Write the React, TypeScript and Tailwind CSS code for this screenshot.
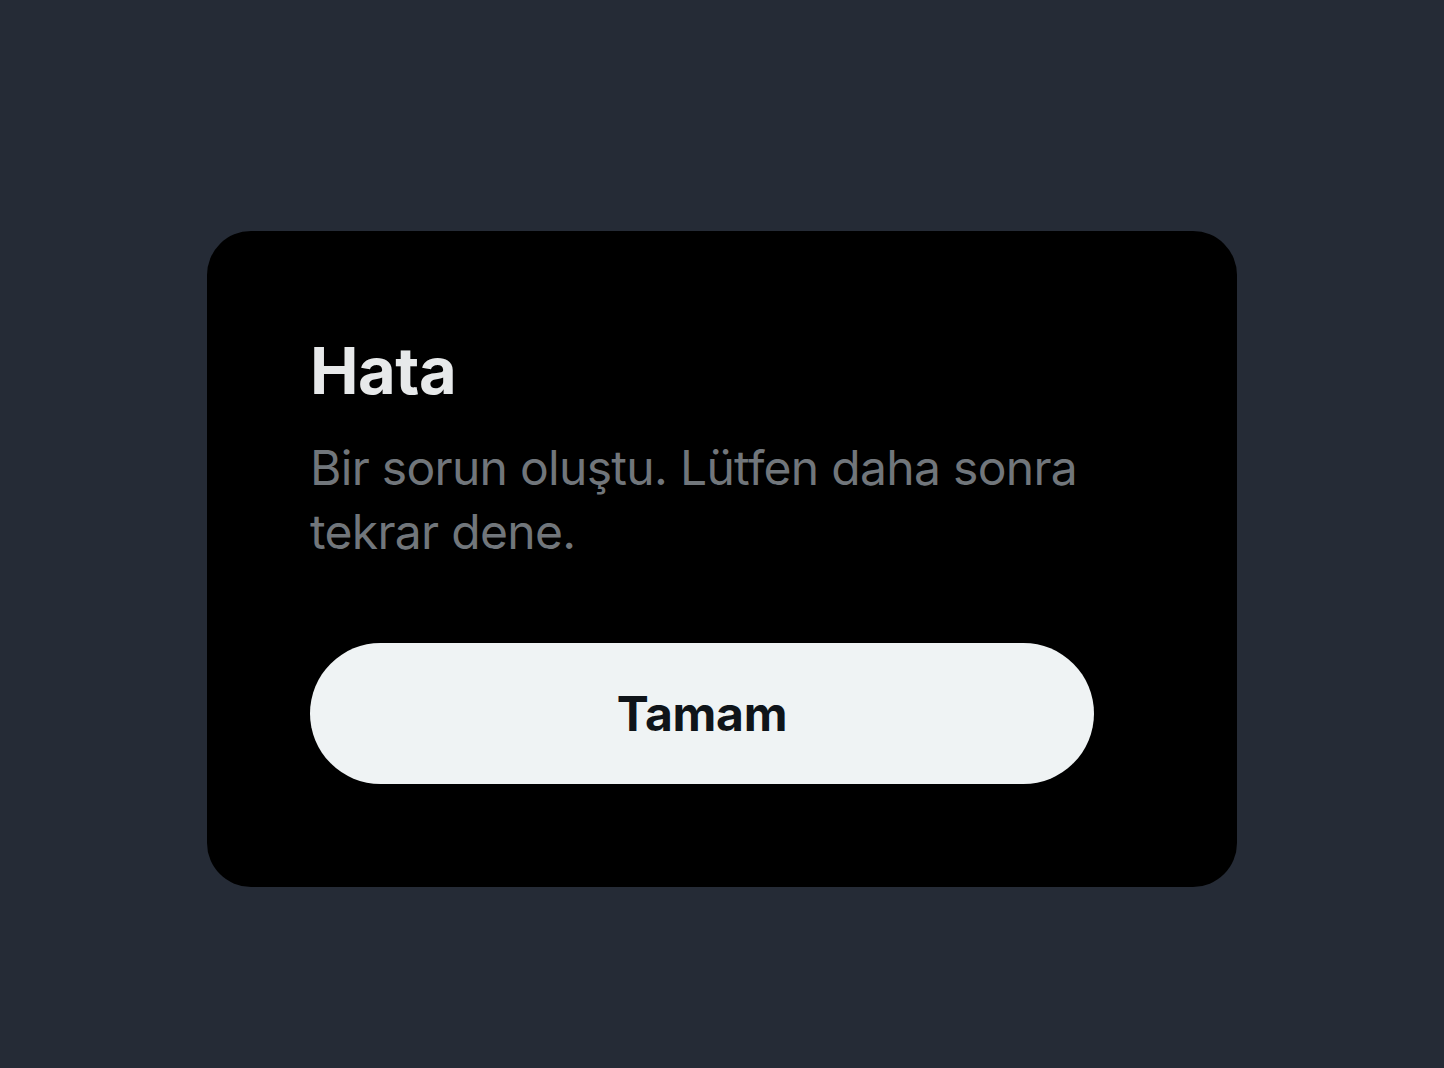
export default function App() {
  return (
    <div
      className="min-h-screen w-full bg-[#252b36] flex justify-center pt-[231px]"
      style={{ fontFamily: "Inter, 'Noto Sans', 'Liberation Sans', sans-serif" }}
    >
      <div className="w-[1030px] h-[656px] bg-black rounded-[44px] pt-[101px] px-[103px]">
        <div className="w-[784px] flex flex-col">
          <h1 className="text-[65px] leading-[77px] font-bold text-[#e7e9ea] tracking-[-0.5px]">Hata</h1>
          <p className="mt-[27px] text-[48px] leading-[64px] text-[#71767b] tracking-[-0.7px]">
            Bir sorun oluştu. Lütfen daha sonra tekrar dene.
          </p>
          <button
            type="button"
            className="mt-[79px] h-[141px] w-full rounded-full bg-[#eff3f4] text-[#0f1419] text-[48px] font-bold flex items-center justify-center tracking-[-0.3px]"
          >
            Tamam
          </button>
        </div>
      </div>
    </div>
  );
}
